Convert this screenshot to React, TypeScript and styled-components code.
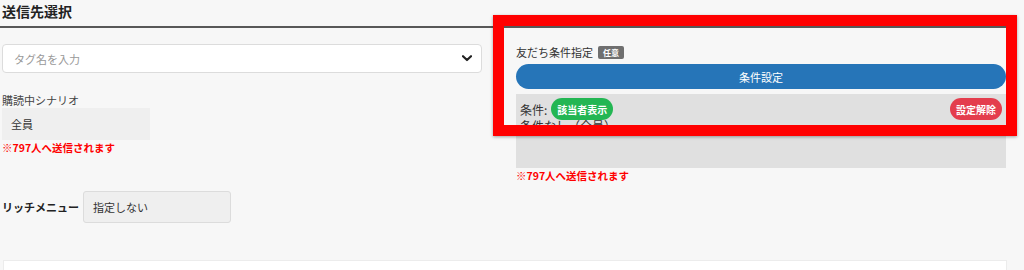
import styled, { createGlobalStyle } from "styled-components";

const GlobalStyle = createGlobalStyle`
  html, body {
    margin: 0;
    padding: 0;
    background: #f7f7f7;
    font-family: "Noto Sans CJK JP", "Noto Sans", sans-serif;
    color: #333;
  }
`;

const App = () => {
  return (
    <Screen>
      <GlobalStyle />
      <Page>
        <Heading>送信先選択</Heading>
        <Columns>
          <LeftCol>
            <TagSelect>
              <Placeholder>タグ名を入力</Placeholder>
              <svg width="10" height="7" viewBox="0 0 10 7">
                <path d="M1 1.2 L5 5 L9 1.2" fill="none" stroke="#222" strokeWidth="2.2" strokeLinecap="round" strokeLinejoin="round" />
              </svg>
            </TagSelect>
            <FieldLabel>購読中シナリオ</FieldLabel>
            <ScenarioBox>全員</ScenarioBox>
            <SendNote>※797人へ送信されます</SendNote>
          </LeftCol>
          <RightCol>
            <ConditionHeader>
              友だち条件指定
              <OptionalBadge>任意</OptionalBadge>
            </ConditionHeader>
            <SettingButton>条件設定</SettingButton>
            <ConditionBox>
              <ConditionRow>
                <span>条件:</span>
                <Pill $color="#23b653">該当者表示</Pill>
                <Spacer />
                <Pill $color="#e43d4d">設定解除</Pill>
              </ConditionRow>
              <ConditionText>条件なし（全員）</ConditionText>
            </ConditionBox>
            <SendNote>※797人へ送信されます</SendNote>
          </RightCol>
        </Columns>
        <RichMenuRow>
          <RichMenuLabel>リッチメニュー</RichMenuLabel>
          <RichMenuBox>指定しない</RichMenuBox>
        </RichMenuRow>
        <BottomPanel />
      </Page>
      <Highlight />
    </Screen>
  );
};

export default App;

const Screen = styled.div`
  position: relative;
  width: 1024px;
  height: 270px;
  overflow: hidden;
`;

const Page = styled.div`
  width: 1006px;
`;

const Heading = styled.div`
  height: 26px;
  padding-left: 2px;
  font-size: 14px;
  font-weight: 700;
  line-height: 22px;
  color: #222;
  border-bottom: 2px solid #585858;
`;

const Columns = styled.div`
  display: grid;
  grid-template-columns: 480px 490px;
  column-gap: 34px;
  padding-left: 2px;
  margin-top: 16px;
`;

const LeftCol = styled.div`
  display: flex;
  flex-direction: column;
  align-items: flex-start;
`;

const RightCol = styled.div`
  display: flex;
  flex-direction: column;
`;

const TagSelect = styled.div`
  box-sizing: border-box;
  width: 480px;
  height: 29px;
  display: flex;
  align-items: center;
  justify-content: space-between;
  padding: 0 9px 0 11px;
  background: #fff;
  border: 1px solid #dcdcdc;
  border-radius: 4px;
`;

const Placeholder = styled.span`
  font-size: 11px;
  color: #999;
`;

const FieldLabel = styled.div`
  margin-top: 20px;
  font-size: 11px;
  line-height: 15px;
  color: #444;
`;

const ScenarioBox = styled.div`
  box-sizing: border-box;
  width: 148px;
  height: 32px;
  padding-left: 9px;
  display: flex;
  align-items: center;
  font-size: 11px;
  color: #333;
  background: #efefef;
`;

const SendNote = styled.div`
  margin-top: 1px;
  font-size: 10.5px;
  font-weight: 700;
  line-height: 13px;
  color: #ff0000;
`;

const ConditionHeader = styled.div`
  display: flex;
  align-items: center;
  gap: 5px;
  height: 16px;
  font-size: 11px;
  color: #333;
`;

const OptionalBadge = styled.span`
  display: inline-flex;
  align-items: center;
  justify-content: center;
  width: 26px;
  height: 13px;
  font-size: 8px;
  font-weight: 700;
  color: #fff;
  background: #6f6f6f;
  border-radius: 2px;
`;

const SettingButton = styled.div`
  height: 25px;
  margin-top: 4px;
  display: flex;
  align-items: center;
  justify-content: center;
  font-size: 11px;
  color: #fff;
  background: #2675b8;
  border-radius: 13px;
`;

const ConditionBox = styled.div`
  box-sizing: border-box;
  height: 74px;
  margin-top: 5px;
  padding: 4px;
  background: #e0e0e0;
`;

const ConditionRow = styled.div`
  display: flex;
  align-items: center;
  gap: 4px;
  font-size: 12px;
  color: #333;
`;

const Spacer = styled.div`
  flex: 1;
`;

const Pill = styled.span<{ $color: string }>`
  display: inline-flex;
  align-items: center;
  padding: 0 6px;
  height: 22px;
  font-size: 10px;
  font-weight: 700;
  color: #fff;
  background: ${(p) => p.$color};
  border-radius: 11px;
`;

const ConditionText = styled.div`
  margin-top: -3px;
  font-size: 12px;
  color: #333;
`;

const RichMenuRow = styled.div`
  display: flex;
  align-items: center;
  gap: 4px;
  margin-top: 9px;
  padding-left: 2px;
`;

const RichMenuLabel = styled.span`
  font-size: 11px;
  font-weight: 700;
  color: #222;
`;

const RichMenuBox = styled.div`
  box-sizing: border-box;
  width: 148px;
  height: 32px;
  padding-left: 9px;
  display: flex;
  align-items: center;
  font-size: 11px;
  color: #333;
  background: #efefef;
  border: 1px solid #dcdcdc;
  border-radius: 3px;
`;

const BottomPanel = styled.div`
  margin: 37px 0 0 3px;
  width: 1002px;
  height: 30px;
  background: #fff;
  border: 1px solid #ececec;
`;

const Highlight = styled.div`
  position: absolute;
  left: 493px;
  top: 15px;
  width: 524px;
  height: 121px;
  box-sizing: border-box;
  border: 11px solid #ff0000;
  box-shadow: 0 1px 3px rgba(0, 0, 0, 0.35);
  pointer-events: none;
`;
